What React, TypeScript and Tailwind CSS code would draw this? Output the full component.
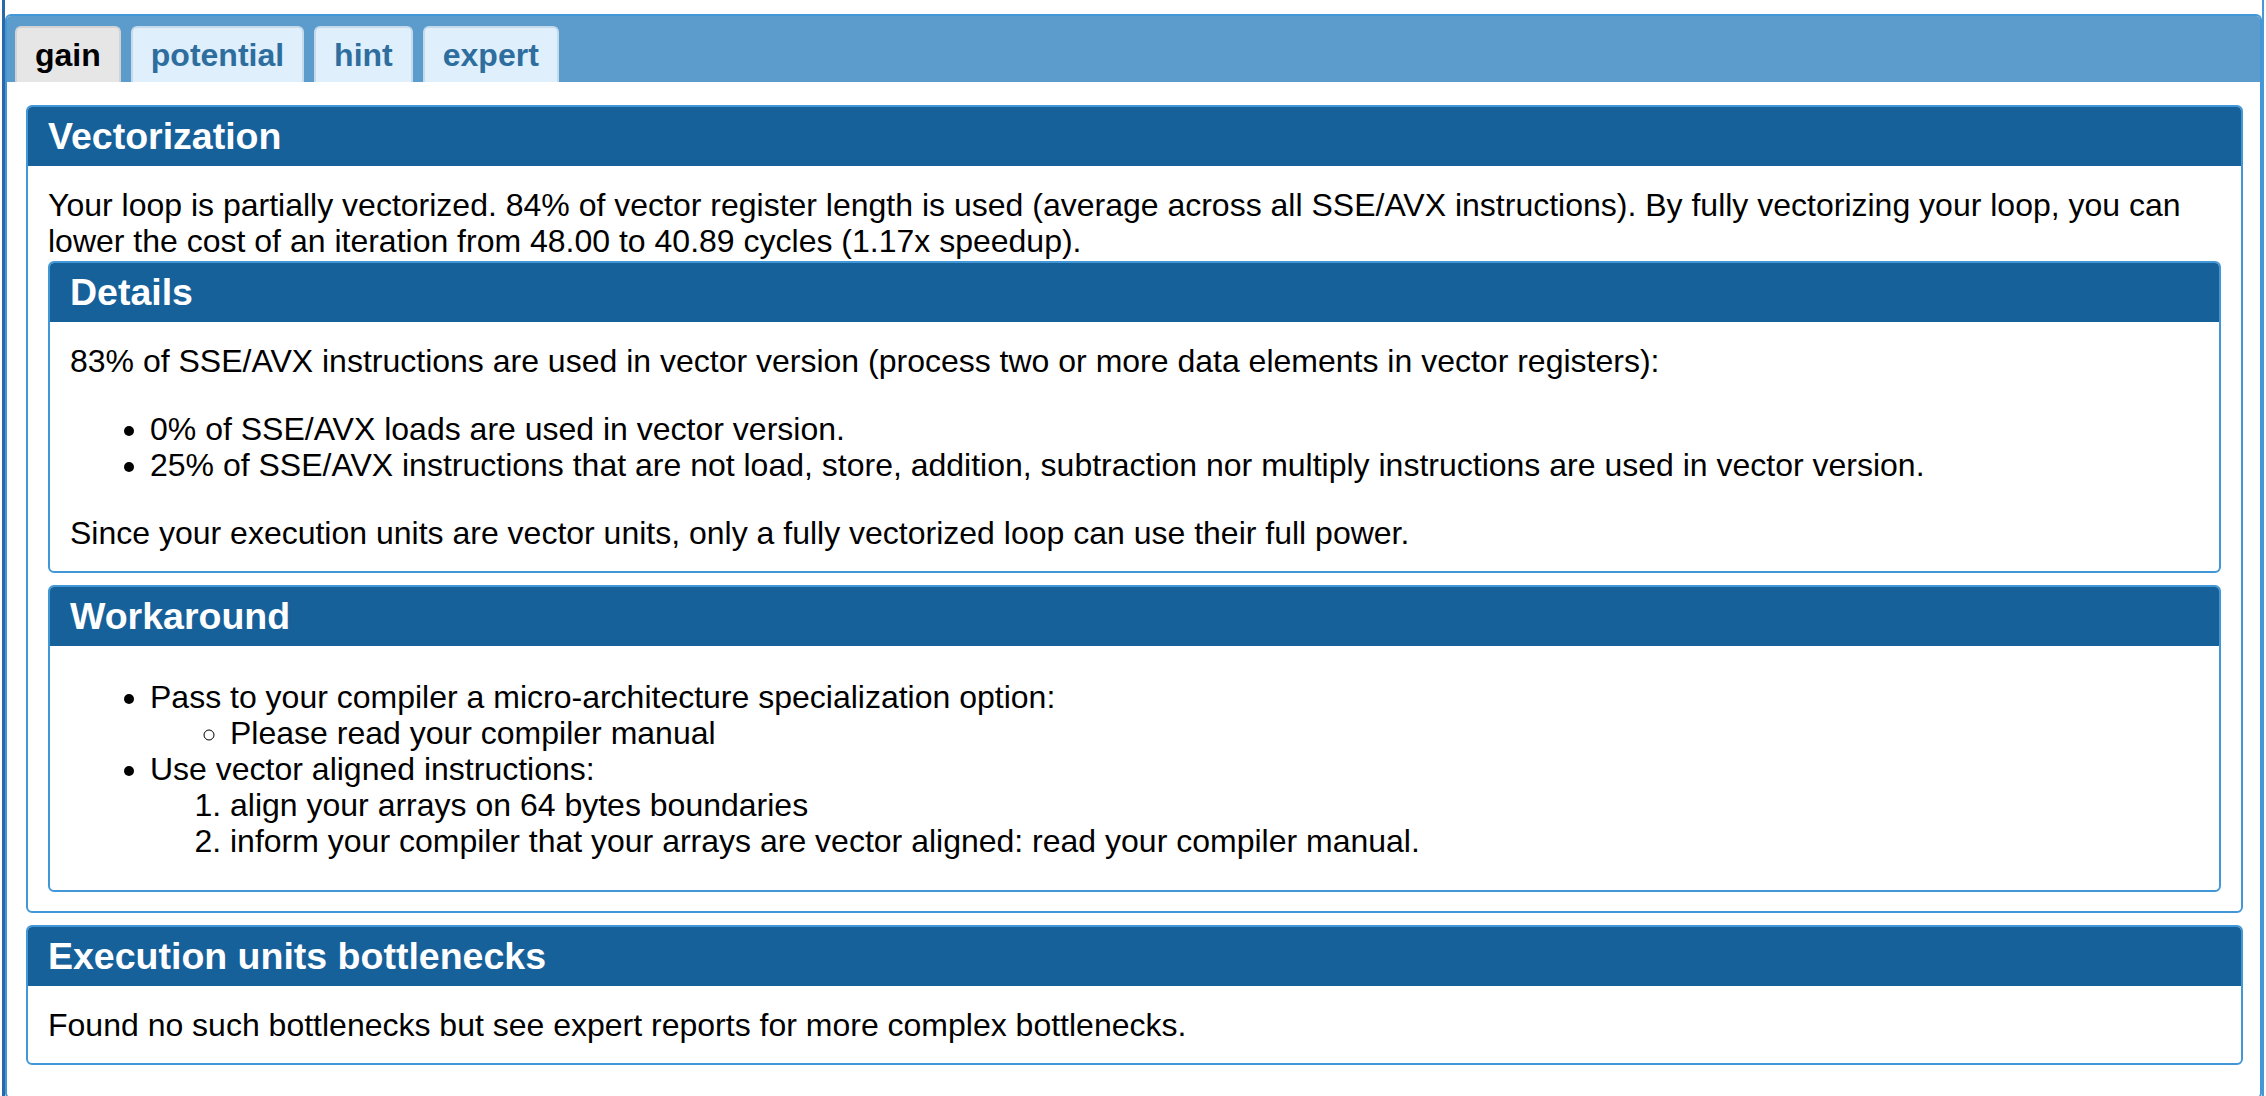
import React from "react";

const Panel = ({ title, children, bodyClass }: { title: string; children: React.ReactNode; bodyClass: string }) => {
  return (
    <div className="rounded-[6px] border-2 border-[#4297d7] overflow-hidden bg-white">
      <h3 className="bg-[#17619b] text-white font-bold text-[37.5px] leading-[43px] py-[8px] pl-[20px]">{title}</h3>
      <div className={bodyClass}>{children}</div>
    </div>
  );
};

const tabs = ["gain", "potential", "hint", "expert"];

export default function App() {
  return (
    <div className="w-[2266px] h-[1096px] overflow-hidden bg-white text-black font-['Liberation_Sans',Arial,sans-serif] text-[32px] leading-[36px]">
      <div className="ml-[2px] w-[2262px] h-full border-l-[3px] border-l-[#2a68aa] border-r-[2px] border-r-[#4a97d8] pt-[14px]">
        <div className="h-[1085px] rounded-[6px] border-2 border-[#4297d7] bg-white">
          <div className="flex gap-[10px] bg-[#5c9ccc] pt-[10px] pl-[8px] rounded-t-[4px]">
            {tabs.map((t, i) => (
              <div
                key={t}
                className={
                  i === 0
                    ? "rounded-t-[6px] border-2 border-b-0 border-[#d3d3d3] bg-[#e6e6e6] px-[18px] py-[9px] font-bold text-black"
                    : "rounded-t-[6px] border-2 border-b-0 border-[#c5dbec] bg-[#dfeffc] px-[18px] py-[9px] font-bold text-[#2e6e9e]"
                }
              >
                {t}
              </div>
            ))}
          </div>

          <div className="flex flex-col gap-[12px] pt-[23px] pl-[19px] pr-[17px]">
            <Panel title="Vectorization" bodyClass="px-[20px] pt-[21px] pb-[19px]">
              <p className="mb-[2px]">
                Your loop is partially vectorized. 84% of vector register length is used (average across all SSE/AVX instructions). By fully vectorizing your loop, you can lower the cost of an iteration from 48.00 to 40.89 cycles (1.17x speedup).
              </p>
              <div className="flex flex-col gap-[12px]">
                <Panel title="Details" bodyClass="px-[20px] pt-[21px] pb-[20px]">
                  <p>83% of SSE/AVX instructions are used in vector version (process two or more data elements in vector registers):</p>
                  <ul className="list-disc pl-[80px] my-[32px]">
                    <li>0% of SSE/AVX loads are used in vector version.</li>
                    <li>25% of SSE/AVX instructions that are not load, store, addition, subtraction nor multiply instructions are used in vector version.</li>
                  </ul>
                  <p>Since your execution units are vector units, only a fully vectorized loop can use their full power.</p>
                </Panel>
                <Panel title="Workaround" bodyClass="px-[20px] pt-[33px] pb-[31px]">
                  <ul className="list-disc pl-[80px]">
                    <li>
                      Pass to your compiler a micro-architecture specialization option:
                      <ul className="list-[circle] pl-[80px]">
                        <li>Please read your compiler manual</li>
                      </ul>
                    </li>
                    <li>
                      Use vector aligned instructions:
                      <ol className="list-decimal pl-[80px]">
                        <li>align your arrays on 64 bytes boundaries</li>
                        <li>inform your compiler that your arrays are vector aligned: read your compiler manual.</li>
                      </ol>
                    </li>
                  </ul>
                </Panel>
              </div>
            </Panel>

            <Panel title="Execution units bottlenecks" bodyClass="px-[20px] pt-[21px] pb-[20px]">
              <p>Found no such bottlenecks but see expert reports for more complex bottlenecks.</p>
            </Panel>
          </div>
        </div>
      </div>
    </div>
  );
}
